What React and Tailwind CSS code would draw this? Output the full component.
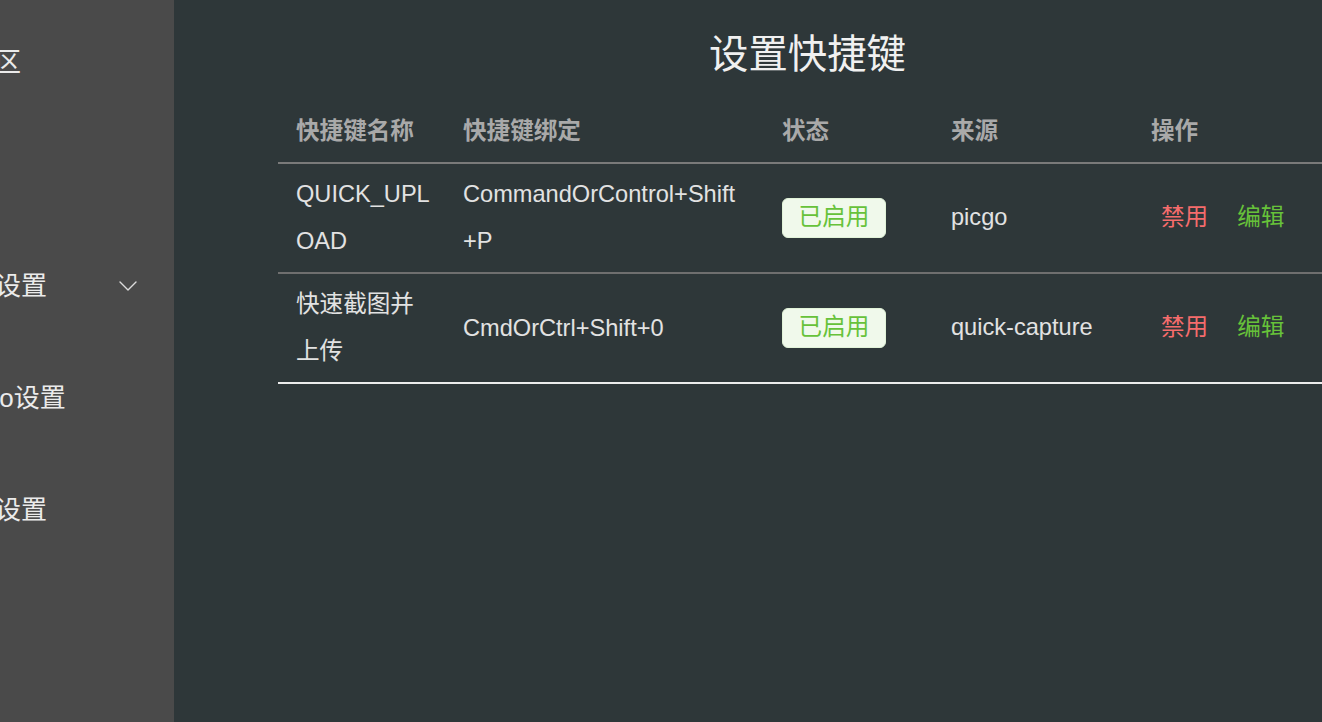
import React from "react";

const FONT = { fontFamily: '"Liberation Sans", "Noto Sans CJK SC", sans-serif' };

const menu = [
    { label: "上传区" },
    { label: "相册" },
    { label: "图床设置", sub: true },
    { label: "PicGo设置" },
    { label: "插件设置" },
];

const rows = [
    { name: "QUICK_UPLOAD", key: "CommandOrControl+Shift+P", from: "picgo" },
    { name: "快速截图并上传", key: "CmdOrCtrl+Shift+0", from: "quick-capture" },
];

function ChevronDown() {
    return (
        <svg width="18" height="10" viewBox="0 0 18 10" fill="none">
            <path d="M1 1l8 8 8-8" stroke="#dcdcdc" strokeWidth="1.4" strokeLinecap="round" strokeLinejoin="round" />
        </svg>
    );
}

function Sidebar() {
    return (
        <div className="w-[174px] shrink-0 h-full bg-[#4a4a4a] overflow-hidden">
            <div className="ml-[-57px] w-[231px] pt-[6px]">
                {menu.map((m) => (
                    <div key={m.label} className="h-[112px] flex items-center justify-between pr-[37px] text-[26px] text-[#ebebeb]">
                        <span className="whitespace-nowrap">{m.label}</span>
                        {m.sub && <ChevronDown />}
                    </div>
                ))}
            </div>
        </div>
    );
}

function ShortcutTable() {
    const cols = "grid grid-cols-[167px_319px_169px_210px_1fr]";
    return (
        <div className="ml-[104px] mr-[104px] mt-[17px] text-[23.6px]">
            {/* header */}
            <div className={`${cols} border-b-2 border-[#7a7a7a] font-bold text-[#a9a9a9]`}>
                <div className="pl-[18px] py-[7px] leading-[47px]">快捷键名称</div>
                <div className="pl-[18px] py-[7px] leading-[47px]">快捷键绑定</div>
                <div className="pl-[18px] py-[7px] leading-[47px]">状态</div>
                <div className="pl-[18px] py-[7px] leading-[47px]">来源</div>
                <div className="pl-[8px] py-[7px] leading-[47px]">操作</div>
            </div>

            {rows.map((r, i) => (
                <div
                    key={r.name}
                    className={`${cols} border-b-2 ${i === rows.length - 1 ? "border-[#ececec]" : "border-[#6f6f6f]"} text-[#e2e2e2]`}
                >
                    <div className="pl-[18px] pr-[9px] py-[7px] leading-[47px] break-all flex items-center">{r.name}</div>
                    <div className="pl-[18px] pr-[21px] py-[7px] leading-[47px] break-all flex items-center">{r.key}</div>
                    <div className="pl-[18px] flex items-center">
                        <span className="h-[40px] w-[104px] flex items-center justify-center rounded-[6px] bg-[#f0f9eb] border border-[#e1f3d8] text-[#67c23a]">
                            已启用
                        </span>
                    </div>
                    <div className="pl-[18px] flex items-center">{r.from}</div>
                    <div className="pl-[18px] flex items-center gap-[29px]">
                        <span className="text-[#f56c6c] cursor-pointer">禁用</span>
                        <span className="text-[#67c23a] cursor-pointer">编辑</span>
                    </div>
                </div>
            ))}
        </div>
    );
}

export default function App() {
    return (
        <div className="flex w-[1322px] h-[722px] overflow-hidden bg-[#2e3739]" style={FONT}>
            <Sidebar />
            <main className="w-[1267px] shrink-0 h-full">
                <h1 className="mt-[24px] h-[60px] leading-[60px] text-center text-[39.4px] text-[#f0f0f0]">设置快捷键</h1>
                <ShortcutTable />
            </main>
        </div>
    );
}
